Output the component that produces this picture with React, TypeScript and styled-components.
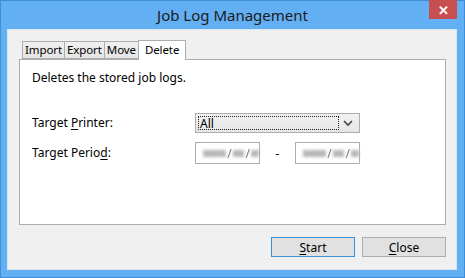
import styled, { createGlobalStyle } from "styled-components";

const Global = createGlobalStyle`
  html, body { margin: 0; padding: 0; }
  body { font-family: "Noto Sans", "Open Sans", sans-serif; font-size: 12px; color: #000; }
`;

const Frame = styled.div`
  width: 465px;
  height: 278px;
  background: #62aff4;
  display: flex;
  flex-direction: column;
  box-sizing: border-box;
  border: 1px solid #3f8fd8;
`;

const TitleBar = styled.div`
  height: 28px;
  display: grid;
  grid-template-columns: 1fr auto 1fr;
  align-items: start;
`;

const Title = styled.div`
  grid-column: 2;
  font-size: 15px;
  line-height: 29px;
  color: #1b1b1b;
`;

const CloseX = styled.div`
  grid-column: 3;
  justify-self: end;
  margin-right: 7px;
  width: 28px;
  height: 19px;
  background: #c74f50;
  display: flex;
  align-items: center;
  justify-content: center;
  color: #fff;
  font-size: 13px;
  font-weight: bold;
  margin-top: -1px;
`;

const Client = styled.div`
  flex: 1;
  margin: 0 7px 7px 6px;
  background: #f0f0f0;
  border: 1px solid #d9e6f2;
  display: flex;
  flex-direction: column;
  padding: 9px 10px 12px 11px;
`;

const TabStrip = styled.div`
  display: flex;
  align-items: flex-end;
  height: 20px;
  padding-left: 4px;
`;

const Tab = styled.div<{ $active?: boolean }>`
  height: ${(p) => (p.$active ? 20 : 18)}px;
  box-sizing: border-box;
  border: 1px solid #adadad;
  border-bottom: ${(p) => (p.$active ? "none" : "1px solid #adadad")};
  margin-left: -1px;
  background: ${(p) => (p.$active ? "#fff" : "linear-gradient(#f0f0f0, #e5e5e5)")};
  font-size: 11.5px;
  letter-spacing: -0.1px;
  line-height: ${(p) => (p.$active ? 17 : 16)}px;
  position: relative;
  z-index: ${(p) => (p.$active ? 2 : 1)};
  padding: 0 ${(p) => (p.$active ? 6 : 2)}px;
  margin-bottom: ${(p) => (p.$active ? -1 : 0)}px;
`;

const Panel = styled.div`
  height: 166px;
  box-sizing: border-box;
  background: #fff;
  border: 1px solid #adadad;
  padding: 10px 12px;
`;

const Desc = styled.div`
  line-height: 16px;
`;

const Form = styled.div`
  margin-top: 27px;
  display: grid;
  grid-template-columns: 163px auto;
  row-gap: 9px;
  align-items: center;
`;

const Label = styled.div`
  line-height: 16px;
`;

const U = styled.span`
  text-decoration: underline;
  text-underline-offset: 2px;
`;

const Select = styled.div`
  width: 165px;
  height: 20px;
  box-sizing: border-box;
  border: 1px solid #acacac;
  background: linear-gradient(#f2f2f2, #e6e6e6);
  display: flex;
  align-items: center;
  padding: 2px;
`;

const Focus = styled.div`
  flex: 1;
  height: 100%;
  box-sizing: border-box;
  border: 1px dotted #222;
  line-height: 13px;
  padding-left: 1px;
  color: #000;
`;

const Chevron = styled.svg`
  width: 18px;
  height: 14px;
`;

const DateRow = styled.div`
  display: flex;
  align-items: center;
`;

const DateBox = styled.div`
  width: 65px;
  height: 22px;
  box-sizing: border-box;
  border: 1px solid #abadb3;
  background: #fff;
  display: flex;
  align-items: center;
  padding-left: 7px;
  gap: 1px;
  color: #555;
`;

const Blur = styled.span<{ $w: number }>`
  display: inline-block;
  width: ${(p) => p.$w}px;
  height: 7px;
  background: #b8b8b8;
  filter: blur(1.6px);
`;

const Slash = styled.span`
  color: #777;
  filter: blur(0.4px);
`;

const Dash = styled.div`
  width: 35px;
  text-align: center;
`;

const Buttons = styled.div`
  margin-top: 12px;
  display: flex;
  justify-content: flex-end;
  gap: 7px;
`;

const Button = styled.div<{ $default?: boolean }>`
  width: 84px;
  height: 20px;
  box-sizing: border-box;
  border: 1px solid ${(p) => (p.$default ? "#3c8ed6" : "#adadad")};
  background: #e1e1e1;
  display: flex;
  align-items: center;
  justify-content: center;
`;

function DateField() {
  return (
    <DateBox>
      <Blur $w={26} />
      <Slash>/</Slash>
      <Blur $w={13} />
      <Slash>/</Slash>
      <Blur $w={9} />
    </DateBox>
  );
}

export default function App() {
  return (
    <>
      <Global />
      <Frame>
        <TitleBar>
          <Title>Job Log Management</Title>
          <CloseX>✕</CloseX>
        </TitleBar>
        <Client>
          <TabStrip>
            <Tab>Import</Tab>
            <Tab>Export</Tab>
            <Tab>Move</Tab>
            <Tab $active>Delete</Tab>
          </TabStrip>
          <Panel>
            <Desc>Deletes the stored job logs.</Desc>
            <Form>
              <Label>
                Target <U>P</U>rinter:
              </Label>
              <Select>
                <Focus>All</Focus>
                <Chevron viewBox="0 0 18 14">
                  <path d="M5 5 L9 9 L13 5" fill="none" stroke="#444" strokeWidth="1.6" />
                </Chevron>
              </Select>
              <Label>
                Target Perio<U>d</U>:
              </Label>
              <DateRow>
                <DateField />
                <Dash>-</Dash>
                <DateField />
              </DateRow>
            </Form>
          </Panel>
          <Buttons>
            <Button $default>
              <span>
                <U>S</U>tart
              </span>
            </Button>
            <Button>
              <span>
                <U>C</U>lose
              </span>
            </Button>
          </Buttons>
        </Client>
      </Frame>
    </>
  );
}
